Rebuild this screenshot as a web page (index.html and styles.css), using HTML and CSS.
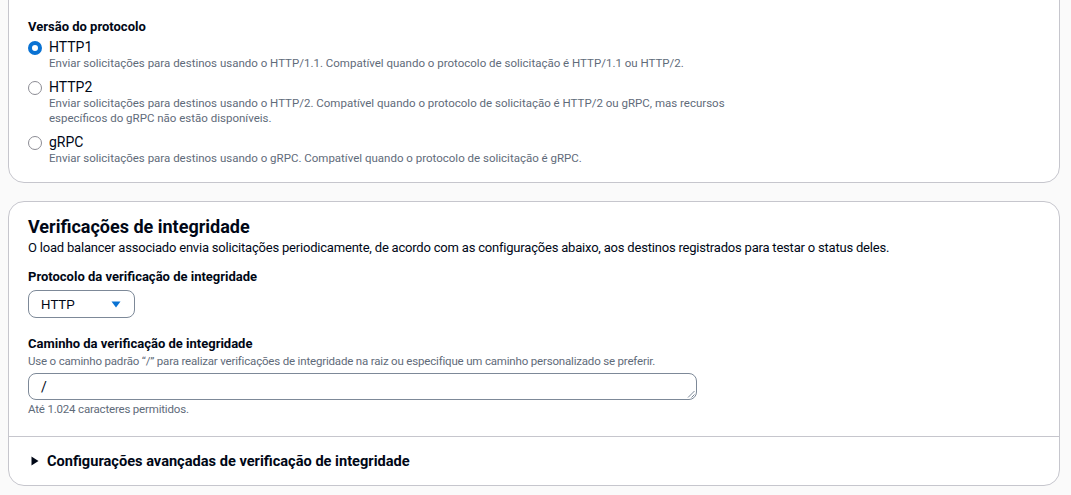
FILE: index.html
```html
<!DOCTYPE html>
<html lang="pt-BR">
<head>
<meta charset="utf-8">
<link rel="stylesheet" href="styles.css">
</head>
<body>
<div class="page">
  <section class="card card-top">
    <div class="field-label">Versão do protocolo</div>
    <div class="radios">
      <div class="radio-item">
        <span class="radio checked"></span>
        <div class="radio-text">
          <div class="radio-label">HTTP1</div>
          <div class="radio-desc">Enviar solicitações para destinos usando o HTTP/1.1. Compatível quando o protocolo de solicitação é HTTP/1.1 ou HTTP/2.</div>
        </div>
      </div>
      <div class="radio-item">
        <span class="radio"></span>
        <div class="radio-text">
          <div class="radio-label">HTTP2</div>
          <div class="radio-desc narrow">Enviar solicitações para destinos usando o HTTP/2. Compatível quando o protocolo de solicitação é HTTP/2 ou gRPC, mas recursos específicos do gRPC não estão disponíveis.</div>
        </div>
      </div>
      <div class="radio-item">
        <span class="radio"></span>
        <div class="radio-text">
          <div class="radio-label">gRPC</div>
          <div class="radio-desc">Enviar solicitações para destinos usando o gRPC. Compatível quando o protocolo de solicitação é gRPC.</div>
        </div>
      </div>
    </div>
  </section>

  <section class="card card-health">
    <div class="card-body">
      <h2 class="card-title">Verificações de integridade</h2>
      <p class="card-desc">O load balancer associado envia solicitações periodicamente, de acordo com as configurações abaixo, aos destinos registrados para testar o status deles.</p>

      <div class="field-label mt-label">Protocolo da verificação de integridade</div>
      <div class="select">
        <span class="select-value">HTTP</span>
        <svg class="caret" width="10" height="7" viewBox="0 0 10 7"><path d="M0.5 0.5 H9.5 L5 6.5 Z" fill="#0972d3"/></svg>
      </div>

      <div class="field-label mt-label2">Caminho da verificação de integridade</div>
      <div class="hint">Use o caminho padrão “/” para realizar verificações de integridade na raiz ou especifique um caminho personalizado se preferir.</div>
      <div class="textbox">
        <span class="textbox-value">/</span>
        <svg class="resize" width="8" height="8" viewBox="0 0 8 8"><path d="M7.5 1 L1 7.5 M7.5 4.5 L4.5 7.5" stroke="#7d8998" stroke-width="1"/></svg>
      </div>
      <div class="hint">Até 1.024 caracteres permitidos.</div>
    </div>
    <div class="expander">
      <svg class="expander-icon" width="8" height="10" viewBox="0 0 8 10"><path d="M0.5 0.5 L7.5 5 L0.5 9.5 Z" fill="#000716"/></svg>
      <span class="expander-label">Configurações avançadas de verificação de integridade</span>
    </div>
  </section>
</div>
</body>
</html>
```

FILE: styles.css
```css
* { box-sizing: border-box; }
html, body { margin: 0; padding: 0; }
body {
  background: #fafafa;
  font-family: Roboto, "Liberation Sans", Arial, sans-serif;
  color: #000716;
  overflow: hidden;
}
.page {
  display: flex;
  flex-direction: column;
  gap: 18px;
  padding: 0 11px 0 8px;
  margin-top: -30px;
}
.card {
  background: #ffffff;
  border: 1px solid #c6c6cd;
  border-radius: 16px;
}
.card-top {
  padding: 46px 19px 16px 19px;
}
.field-label {
  font-size: 13px;
  font-weight: 700;
  line-height: 20px;
}
.radios {
  display: flex;
  flex-direction: column;
  gap: 8px;
  margin-top: 2px;
}
.radio-item {
  display: flex;
  gap: 7px;
}
.radio {
  flex: none;
  width: 14px;
  height: 14px;
  border-radius: 50%;
  border: 1px solid #8c8c94;
  background: #fff;
  margin-top: 2px;
}
.radio.checked {
  border: 4px solid #0972d3;
}
.radio-label {
  font-size: 14px;
  line-height: 17px;
}
.radio-desc {
  font-size: 11.5px;
  letter-spacing: 0;
  line-height: 15px;
  color: #5f6b7a;
}
.radio-desc.narrow { max-width: 676px; }

.card-health { overflow: hidden; }
.card-body {
  padding: 13px 19px 19px 19px;
}
.card-title {
  margin: 0;
  font-size: 18px;
  line-height: 23px;
  font-weight: 700;
}
.card-desc {
  margin: 0;
  font-size: 13px;
  letter-spacing: -0.2px;
  line-height: 20px;
}
.mt-label { margin-top: 9px; }
.select {
  margin-top: 3px;
  width: 107px;
  height: 28px;
  border: 1px solid #7d8998;
  border-radius: 8px;
  display: flex;
  align-items: center;
  justify-content: space-between;
  padding: 0 13px 0 12px;
}
.select-value {
  font-family: "Liberation Sans", Arial, sans-serif;
  font-size: 13px;
}
.caret { display: block; }
.mt-label2 { margin-top: 17px; line-height: 18px; }
.hint {
  font-size: 11.5px;
  letter-spacing: -0.18px;
  line-height: 16px;
  color: #5f6b7a;
}
.textbox {
  position: relative;
  margin-top: 4px;
  margin-bottom: 1px;
  width: 669px;
  height: 27px;
  border: 1px solid #7d8998;
  border-radius: 8px;
  display: flex;
  align-items: center;
  padding-left: 12px;
}
.textbox-value {
  font-size: 14px;
}
.resize {
  position: absolute;
  right: 1px;
  bottom: 1px;
}
.expander {
  border-top: 1px solid #c6c6cd;
  height: 49px;
  display: flex;
  align-items: center;
  gap: 8px;
  padding-left: 22px;
}
.expander-icon { display: block; }
.expander-label {
  font-size: 14.6px;
  font-weight: 700;
}
```
